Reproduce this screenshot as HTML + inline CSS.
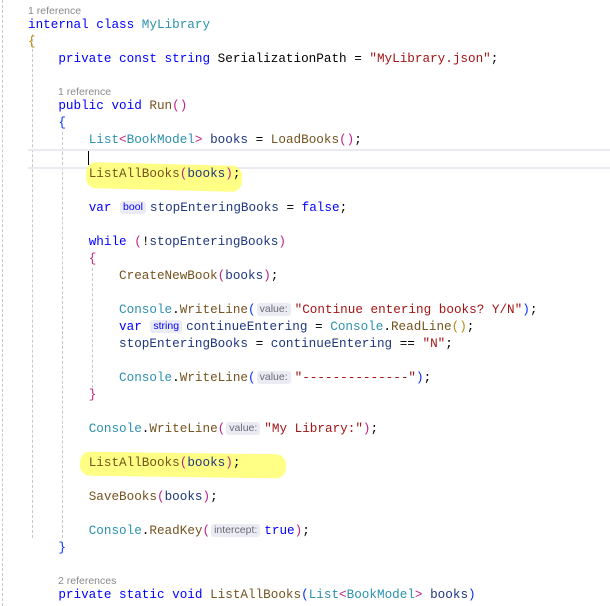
<!DOCTYPE html>
<html><head><meta charset="utf-8"><style>
body{margin:0;width:610px;height:604px;background:#fff;overflow:hidden;position:relative;font-family:"Liberation Mono",monospace;font-size:12.65px;color:#1f377f}
.w{position:absolute;left:0;top:1.5px;width:610px;height:604px}
.l{position:absolute;left:28px;height:17px;line-height:17px;white-space:pre}
.c{position:absolute;left:28px;height:13px;line-height:13px;font-family:"Liberation Sans",sans-serif;font-size:10.5px;color:#8a8a8a;white-space:pre}
.k{color:#0000ff}.t{color:#2b91af}.m{color:#74531f}.s{color:#a31515}.p{color:#000}
.b1{color:#b5890d}.b2{color:#0431fa}.b3{color:#c01f86}
.h{display:inline-block;background:#ebebf3;color:#6a6a7a;font-family:"Liberation Sans",sans-serif;font-size:10.5px;line-height:13px;padding:0 3px;border-radius:3px;margin:0 4px 0 1px;vertical-align:1px}
.hk{color:#0000ff}
.g{position:absolute;width:0;border-left:1px dashed #c8c8c8}
.y{position:absolute;background:#ffff70;opacity:.85;border-radius:10px}
</style></head><body><div class="w">
<div class="g" style="left:2px;top:-2px;height:606px"></div>
<div class="g" style="left:32px;top:32px;height:504px"></div>
<div class="g" style="left:62px;top:130px;height:406px"></div>
<div class="g" style="left:92px;top:266px;height:120px"></div>
<div style="position:absolute;left:28px;right:0;top:147px;height:16px;border-top:2px solid #eaeaf0;border-bottom:2px solid #eaeaf0"></div>
<div style="position:absolute;left:88px;top:149px;width:1px;height:14px;background:#000"></div>
<div class="y" style="left:86px;top:162px;width:156px;height:26px;transform:rotate(1.5deg)"></div>
<div class="y" style="left:80px;top:451px;width:206px;height:24px;transform:rotate(0.8deg)"></div>

<div class="c" style="top:3px">1 reference</div>
<div class="l" style="top:14.5px"><span class="k">internal class</span> <span class="t">MyLibrary</span></div>
<div class="l b1" style="top:31.5px">{</div>
<div class="l" style="top:48.5px">    <span class="k">private const string</span> <span class="p">SerializationPath = </span><span class="s">"MyLibrary.json"</span><span class="p">;</span></div>
<div class="c" style="top:84px;left:58px">1 reference</div>
<div class="l" style="top:95.5px">    <span class="k">public void</span> <span class="m">Run</span><span class="b3">()</span></div>
<div class="l" style="top:112.5px">    <span class="b2">{</span></div>
<div class="l" style="top:129.5px">        <span class="t">List</span><span class="b3">&lt;</span><span class="t">BookModel</span><span class="b3">&gt;</span> books <span class="p">=</span> <span class="m">LoadBooks</span><span class="b3">()</span><span class="p">;</span></div>
<div class="l" style="top:163.5px">        <span class="m">ListAllBooks</span><span class="b3">(</span>books<span class="b3">)</span><span class="p">;</span></div>
<div class="l" style="top:197.5px">        <span class="k">var</span> <span class="h hk">bool</span>stopEnteringBooks <span class="p">=</span> <span class="k">false</span><span class="p">;</span></div>
<div class="l" style="top:231.5px">        <span class="k">while</span> <span class="b3">(</span><span class="p">!</span>stopEnteringBooks<span class="b3">)</span></div>
<div class="l" style="top:248.5px">        <span class="b3">{</span></div>
<div class="l" style="top:265.5px">            <span class="m">CreateNewBook</span><span class="b3">(</span>books<span class="b3">)</span><span class="p">;</span></div>
<div class="l" style="top:299.5px">            <span class="t">Console</span><span class="p">.</span><span class="m">WriteLine</span><span class="b2">(</span><span class="h">value:</span><span class="s">"Continue entering books? Y/N"</span><span class="b2">)</span><span class="p">;</span></div>
<div class="l" style="top:316.5px">            <span class="k">var</span> <span class="h hk">string</span>continueEntering <span class="p">=</span> <span class="t">Console</span><span class="p">.</span><span class="m">ReadLine</span><span class="b1">()</span><span class="p">;</span></div>
<div class="l" style="top:333.5px">            stopEnteringBooks <span class="p">=</span> continueEntering <span class="p">==</span> <span class="s">"N"</span><span class="p">;</span></div>
<div class="l" style="top:367.5px">            <span class="t">Console</span><span class="p">.</span><span class="m">WriteLine</span><span class="b2">(</span><span class="h">value:</span><span class="s">"--------------"</span><span class="b2">)</span><span class="p">;</span></div>
<div class="l" style="top:384.5px">        <span class="b3">}</span></div>
<div class="l" style="top:418.5px">        <span class="t">Console</span><span class="p">.</span><span class="m">WriteLine</span><span class="b3">(</span><span class="h">value:</span><span class="s">"My Library:"</span><span class="b3">)</span><span class="p">;</span></div>
<div class="l" style="top:452.5px">        <span class="m">ListAllBooks</span><span class="b3">(</span>books<span class="b3">)</span><span class="p">;</span></div>
<div class="l" style="top:486.5px">        <span class="m">SaveBooks</span><span class="b3">(</span>books<span class="b3">)</span><span class="p">;</span></div>
<div class="l" style="top:520.5px">        <span class="t">Console</span><span class="p">.</span><span class="m">ReadKey</span><span class="b3">(</span><span class="h">intercept:</span><span class="k">true</span><span class="b3">)</span><span class="p">;</span></div>
<div class="l" style="top:537.5px">    <span class="b2">}</span></div>
<div class="c" style="top:573px;left:58px">2 references</div>
<div class="l" style="top:584.5px">    <span class="k">private static void</span> <span class="m">ListAllBooks</span><span class="b2">(</span><span class="t">List</span><span class="b3">&lt;</span><span class="t">BookModel</span><span class="b3">&gt;</span> books<span class="b2">)</span></div>
</div></body></html>
